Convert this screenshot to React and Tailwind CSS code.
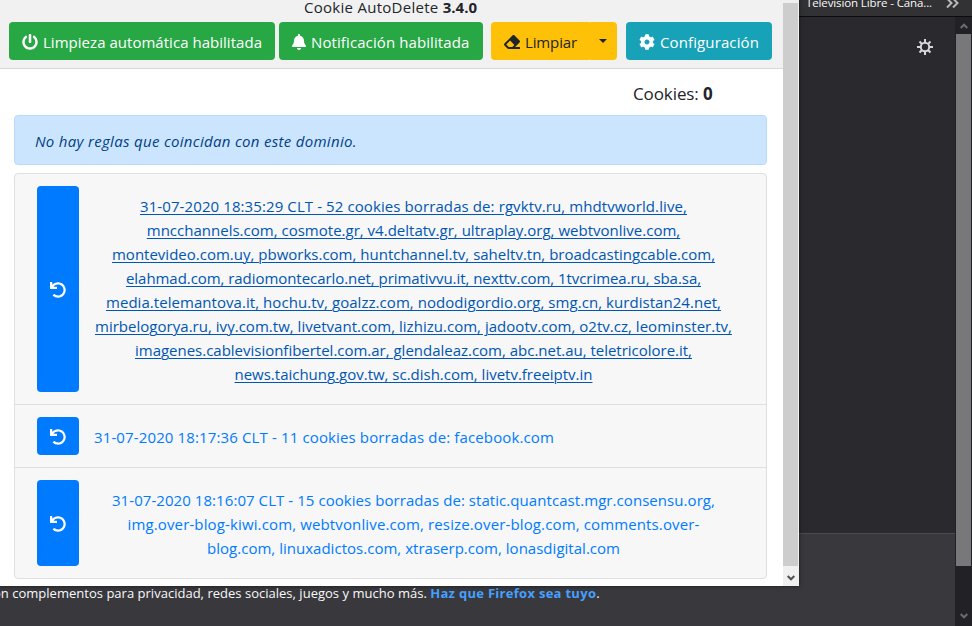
import { FaPowerOff, FaBell, FaEraser, FaCog, FaUndo } from "react-icons/fa";

const LOGS = [
  {
    id: "a",
    link: "text-[#0056b3] underline decoration-1 underline-offset-[2px]",
    align: "items-center",
    lines: [
      ["31-07-2020 18:35:29 CLT - 52 cookies borradas de: rgvktv.ru, mhdtvworld.live,", "tracking-[0.098px]"],
      ["mncchannels.com, cosmote.gr, v4.deltatv.gr, ultraplay.org, webtvonlive.com,", "tracking-[0.009px]"],
      ["montevideo.com.uy, pbworks.com, huntchannel.tv, saheltv.tn, broadcastingcable.com,", "tracking-[0.002px]"],
      ["elahmad.com, radiomontecarlo.net, primativvu.it, nexttv.com, 1tvcrimea.ru, sba.sa,", "tracking-[-0.056px]"],
      ["media.telemantova.it, hochu.tv, goalzz.com, nododigordio.org, smg.cn, kurdistan24.net,", "tracking-[0.051px]"],
      ["mirbelogorya.ru, ivy.com.tw, livetvant.com, lizhizu.com, jadootv.com, o2tv.cz, leominster.tv,", "tracking-[0.024px]"],
      ["imagenes.cablevisionfibertel.com.ar, glendaleaz.com, abc.net.au, teletricolore.it,", "tracking-[-0.013px]"],
      ["news.taichung.gov.tw, sc.dish.com, livetv.freeiptv.in", "tracking-[-0.009px]"],
    ],
  },
  {
    id: "b",
    link: "text-[#007bff]",
    align: "items-start",
    lines: [["31-07-2020 18:17:36 CLT - 11 cookies borradas de: facebook.com", "tracking-[0.131px]"]],
  },
  {
    id: "c",
    link: "text-[#007bff]",
    align: "items-center",
    lines: [
      ["31-07-2020 18:16:07 CLT - 15 cookies borradas de: static.quantcast.mgr.consensu.org,", "tracking-[0.062px]"],
      ["img.over-blog-kiwi.com, webtvonlive.com, resize.over-blog.com, comments.over-", "tracking-[0.133px]"],
      ["blog.com, linuxadictos.com, xtraserp.com, lonasdigital.com", "tracking-[0.02px]"],
    ],
  },
];

function Header() {
  return (
    <header className="flex h-[69px] flex-col border-b border-[#d8d8d8] bg-[#f1f1f1]">
      <div className="flex h-[22px] justify-center pr-[2px]">
        <div className="-mt-[5px] h-6 leading-6 tracking-[0.28px] whitespace-nowrap">
          Cookie AutoDelete <b className="tracking-normal">3.4.0</b>
        </div>
      </div>
      <div className="flex h-[38px] pl-[9px] whitespace-nowrap text-white">
        <button className="flex w-[266px] items-center rounded bg-[#28a745] pl-[13px]">
          <FaPowerOff className="mt-[2px] size-4" />
          <span className="ml-[5px] pt-[2px] tracking-[0.03px]">Limpieza automática habilitada</span>
        </button>
        <button className="ml-1 flex w-[204px] items-center rounded bg-[#28a745] pl-[13px]">
          <FaBell className="mt-[2px] h-4 w-[14px]" />
          <span className="ml-[5px] pt-[2px] tracking-[0.1px]">Notificación habilitada</span>
        </button>
        <div className="ml-2 flex text-[#212529]">
          <button className="flex w-[99px] items-center rounded-l rounded-r-[1px] bg-[#ffc107] pl-[13px]">
            <FaEraser className="mt-[2px] size-4" />
            <span className="ml-[5px] pt-[2px] tracking-[-0.134px]">Limpiar</span>
          </button>
          <button className="flex w-[27px] items-center justify-center rounded-l-[1px] rounded-r bg-[#ffc107]">
            <svg width="8" height="4" viewBox="0 0 8 4" className="-ml-[2px]">
              <path d="M0 0h8L4 4z" fill="currentColor" />
            </svg>
          </button>
        </div>
        <button className="ml-[9px] flex w-[146px] items-center rounded bg-[#17a2b8] pl-[13px]">
          <FaCog className="mt-[2px] size-4" />
          <span className="ml-[5px] pt-[2px] tracking-[0.114px]">Configuración</span>
        </button>
      </div>
    </header>
  );
}

function LogRow({ log }) {
  return (
    <li className="flex border-b border-[#dfdfdf] py-3 pr-[33px] pl-[22px] last:border-b-0">
      <button className="flex w-[42px] shrink-0 items-center justify-center rounded bg-[#007bff] text-white">
        <FaUndo className="mt-[2px] size-4" />
      </button>
      <div className={`ml-[15px] flex flex-1 flex-col py-[7px] ${log.align} ${log.link}`}>
        {log.lines.map(([text, tracking]) => (
          <div key={text} className={`h-6 leading-[26px] whitespace-nowrap ${tracking}`}>{text}</div>
        ))}
      </div>
    </li>
  );
}

function Popup() {
  return (
    <div className="absolute top-0 left-0 flex h-[586px] w-[799px] bg-white text-[15px] text-[#212529] shadow-[0_0_4px_rgba(0,0,0,0.5)]">
      <div className="w-[783px]">
        <Header />
        <div className="flex h-[46px] items-center pl-[633px] text-[17px] whitespace-nowrap">
          <span className="pt-[3px] tracking-[-0.1px]">Cookies: <b>0</b></span>
        </div>
        <div className="ml-[14px] flex h-[50px] w-[753px] items-center rounded border border-[#b8daff] bg-[#cce5ff] pl-5 text-[#004085]">
          <i className="pt-[3px] tracking-[0.31px] whitespace-nowrap">No hay reglas que coincidan con este dominio.</i>
        </div>
        <ul className="mt-2 ml-[14px] w-[753px] rounded border border-[#dfdfdf] bg-[#f7f7f7]">
          {LOGS.map((log) => <LogRow key={log.id} log={log} />)}
        </ul>
      </div>
      <div className="flex w-4 flex-col bg-[#f0f0f0]">
        <div className="mt-[3px] mr-px h-[563px] bg-[#cdcdcd]" />
        <div className="flex flex-1 items-center justify-center pt-[3px] pr-px">
          <Chevron color="#505050" />
        </div>
      </div>
    </div>
  );
}

function Chevron({ color, up }) {
  return (
    <svg width="8" height="6" viewBox="0 0 8 6" className={up ? "rotate-180" : ""}>
      <path d="M.7 1 4 4.3 7.3 1" fill="none" stroke={color} strokeWidth="2" />
    </svg>
  );
}

function SunGear() {
  return (
    <svg width="16" height="16" viewBox="0 0 16 16" fill="none" stroke="#d7d7db" strokeWidth="2">
      <circle cx="8" cy="8" r="4.2" />
      <path d="M8 0v3.5M8 12.5V16M0 8h3.5M12.5 8H16M2.5 2.5 5 5M11 11l2.5 2.5M2.5 13.5 5 11M11 5l2.5-2.5" />
    </svg>
  );
}

export default function App() {
  return (
    <div className="relative flex h-[626px] w-[972px] flex-col overflow-hidden bg-[#2a2a2e] font-['Open_Sans','Noto_Sans',sans-serif]">
      <div className="flex h-[17px] shrink-0 border-b border-[#0c0c0d] bg-[#323234] pl-[806px] text-[11.5px] text-[#f9f9fa]">
        <div className="-mt-[5px] h-4 w-[140px] leading-4 tracking-[-0.12px] whitespace-nowrap">Television Libre - Cana...</div>
        <svg width="13" height="10" viewBox="0 0 13 10" className="-mt-[2px]" fill="none" stroke="#b9b9bc" strokeWidth="2">
          <path d="M1 .5 5.5 5 1 9.5M7 .5 11.5 5 7 9.5" />
        </svg>
      </div>
      <div className="flex flex-1">
        <div className="flex w-[955px] flex-col">
          <div className="flex h-[516px] justify-end pt-[22px] pr-[22px]">
            <SunGear />
          </div>
          <div className="flex-1 border-t border-[#4a4a4f] bg-[#38383d] pt-[49px]">
            <p className="-ml-[7px] h-5 text-[13px] leading-5 tracking-[0.016px] whitespace-nowrap text-[#f9f9fa]">
              on complementos para privacidad, redes sociales, juegos y mucho más.{" "}
              <b className="tracking-[0.291px] text-[#45a1ff]">Haz que Firefox sea tuyo</b>.
            </p>
          </div>
        </div>
        <div className="flex w-[17px] flex-col bg-[#222226] px-px">
          <div className="flex h-[17px] items-center justify-center">
            <Chevron color="#6c6c6e" up />
          </div>
          <div className="h-[532px] bg-[#78787a]" />
          <div className="flex flex-1 items-end justify-center pb-[7px]">
            <Chevron color="#6c6c6e" />
          </div>
        </div>
      </div>
      <Popup />
    </div>
  );
}
